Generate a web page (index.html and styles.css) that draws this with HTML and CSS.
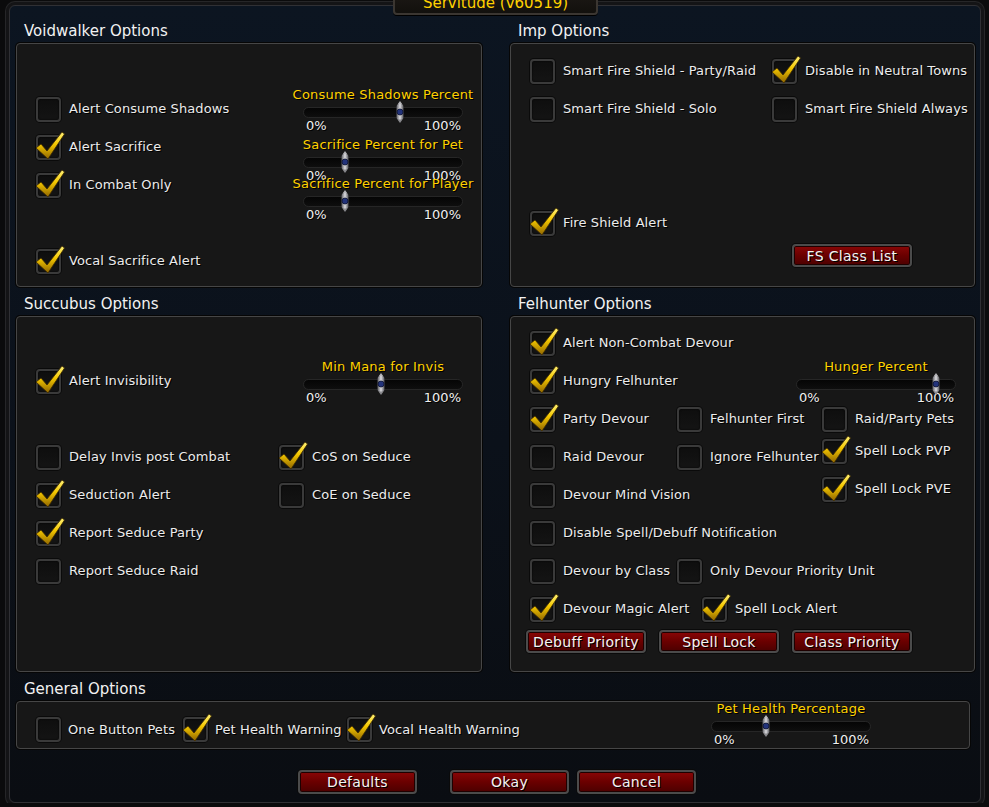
FILE: index.html
```html
<!DOCTYPE html>
<html lang="en">
<head>
    <meta charset="UTF-8">
    <meta name="viewport" content="width=device-width, initial-scale=1.0">
    <title>Servitude Options</title>
    <link rel="stylesheet" href="styles.css">
</head>
<body>

<svg class="defs" width="0" height="0" aria-hidden="true">
    <defs>
        <linearGradient id="gold" x1="0" y1="0" x2="0" y2="1">
            <stop offset="0" stop-color="#fff27a"/>
            <stop offset="0.45" stop-color="#f5c800"/>
            <stop offset="1" stop-color="#8f6500"/>
        </linearGradient>
        <linearGradient id="metal" x1="0" y1="0" x2="1" y2="0">
            <stop offset="0" stop-color="#5e5e63"/>
            <stop offset="0.5" stop-color="#dcdce0"/>
            <stop offset="1" stop-color="#55555a"/>
        </linearGradient>
        <symbol id="tick" viewBox="-2 -5 32 32">
            <path d="M0 13 L5 9 L11 16 L26 -3 L28.5 -1 L12 24 Z" fill="url(#gold)" stroke="#3d2b00" stroke-width="0.8" stroke-linejoin="round"/>
        </symbol>
        <symbol id="knob" viewBox="0 0 11 22">
            <path d="M5.5 0 L8 3.5 L3 3.5 Z" fill="#b8b8bc"/>
            <rect x="2" y="3" width="7" height="16" rx="3" fill="url(#metal)"/>
            <circle cx="5.5" cy="11" r="3" fill="#23337a" stroke="#0b1130" stroke-width="0.8"/>
            <path d="M3 18.5 L8 18.5 L5.5 22 Z" fill="#8a8a8e"/>
        </symbol>
    </defs>
</svg>

<div class="frame">
    <div class="title-tab">Servitude (v60519)</div>

    <div class="columns">
        <!-- Voidwalker -->
        <section class="group">
            <h2 class="group-title">Voidwalker Options</h2>
            <div class="panel panel-top grid-left">
                <div class="check r2 c1"><span class="box"></span>Alert Consume Shadows</div>
                <div class="check r3 c1 on"><span class="box"><svg><use href="#tick"/></svg></span>Alert Sacrifice</div>
                <div class="check r4 c1 on"><span class="box"><svg><use href="#tick"/></svg></span>In Combat Only</div>
                <div class="check r6 c1 on"><span class="box"><svg><use href="#tick"/></svg></span>Vocal Sacrifice Alert</div>

                <div class="slider r2 c3 s-first">
                    <div class="slider-label">Consume Shadows Percent</div>
                    <div class="track"><span class="thumb" style="left: 61%"><svg><use href="#knob"/></svg></span></div>
                    <div class="slider-range"><span>0%</span><span>100%</span></div>
                </div>
                <div class="slider r3 c3 s-second">
                    <div class="slider-label">Sacrifice Percent for Pet</div>
                    <div class="track"><span class="thumb" style="left: 26%"><svg><use href="#knob"/></svg></span></div>
                    <div class="slider-range"><span>0%</span><span>100%</span></div>
                </div>
                <div class="slider r4 c3 s-third">
                    <div class="slider-label">Sacrifice Percent for Player</div>
                    <div class="track"><span class="thumb" style="left: 26%"><svg><use href="#knob"/></svg></span></div>
                    <div class="slider-range"><span>0%</span><span>100%</span></div>
                </div>
            </div>
        </section>

        <!-- Imp -->
        <section class="group">
            <h2 class="group-title">Imp Options</h2>
            <div class="panel panel-top grid-imp">
                <div class="check r1 c1"><span class="box"></span>Smart Fire Shield - Party/Raid</div>
                <div class="check r1 c2 on"><span class="box"><svg><use href="#tick"/></svg></span>Disable in Neutral Towns</div>
                <div class="check r2 c1"><span class="box"></span>Smart Fire Shield - Solo</div>
                <div class="check r2 c2"><span class="box"></span>Smart Fire Shield Always</div>
                <div class="check r5 c1 on"><span class="box"><svg><use href="#tick"/></svg></span>Fire Shield Alert</div>
                <div class="btn-row r6 c2 fs-row">
                    <button class="btn">FS Class List</button>
                </div>
            </div>
        </section>

        <!-- Succubus -->
        <section class="group">
            <h2 class="group-title">Succubus Options</h2>
            <div class="panel panel-bottom grid-left">
                <div class="check r2 c1 on"><span class="box"><svg><use href="#tick"/></svg></span>Alert Invisibility</div>
                <div class="slider r2 c3 s-first">
                    <div class="slider-label">Min Mana for Invis</div>
                    <div class="track"><span class="thumb" style="left: 49%"><svg><use href="#knob"/></svg></span></div>
                    <div class="slider-range"><span>0%</span><span>100%</span></div>
                </div>
                <div class="check r4 c1"><span class="box"></span>Delay Invis post Combat</div>
                <div class="check r4 c2 on"><span class="box"><svg><use href="#tick"/></svg></span>CoS on Seduce</div>
                <div class="check r5 c1 on"><span class="box"><svg><use href="#tick"/></svg></span>Seduction Alert</div>
                <div class="check r5 c2"><span class="box"></span>CoE on Seduce</div>
                <div class="check r6 c1 on"><span class="box"><svg><use href="#tick"/></svg></span>Report Seduce Party</div>
                <div class="check r7 c1"><span class="box"></span>Report Seduce Raid</div>
            </div>
        </section>

        <!-- Felhunter -->
        <section class="group">
            <h2 class="group-title">Felhunter Options</h2>
            <div class="panel panel-bottom grid-fel">
                <div class="check r1 c1 on"><span class="box"><svg><use href="#tick"/></svg></span>Alert Non-Combat Devour</div>
                <div class="check r2 c1 on"><span class="box"><svg><use href="#tick"/></svg></span>Hungry Felhunter</div>
                <div class="slider r2 hunger s-first">
                    <div class="slider-label">Hunger Percent</div>
                    <div class="track"><span class="thumb" style="left: 88%"><svg><use href="#knob"/></svg></span></div>
                    <div class="slider-range"><span>0%</span><span>100%</span></div>
                </div>
                <div class="check r3 c1 on"><span class="box"><svg><use href="#tick"/></svg></span>Party Devour</div>
                <div class="check r3 c2"><span class="box"></span>Felhunter First</div>
                <div class="check r3 c4"><span class="box"></span>Raid/Party Pets</div>
                <div class="check r4 c1"><span class="box"></span>Raid Devour</div>
                <div class="check r4 c2"><span class="box"></span>Ignore Felhunter</div>
                <div class="check r4 c4 on lift"><span class="box"><svg><use href="#tick"/></svg></span>Spell Lock PVP</div>
                <div class="check r5 c1"><span class="box"></span>Devour Mind Vision</div>
                <div class="check r5 c4 on lift"><span class="box"><svg><use href="#tick"/></svg></span>Spell Lock PVE</div>
                <div class="check r6 c1"><span class="box"></span>Disable Spell/Debuff Notification</div>
                <div class="check r7 c1"><span class="box"></span>Devour by Class</div>
                <div class="check r7 c2"><span class="box"></span>Only Devour Priority Unit</div>
                <div class="check r8 c1 on"><span class="box"><svg><use href="#tick"/></svg></span>Devour Magic Alert</div>
                <div class="check r8 c2 on indent"><span class="box"><svg><use href="#tick"/></svg></span>Spell Lock Alert</div>
                <div class="btn-row r9 fel-buttons">
                    <button class="btn">Debuff Priority</button>
                    <button class="btn">Spell Lock</button>
                    <button class="btn">Class Priority</button>
                </div>
            </div>
        </section>
    </div>

    <!-- General -->
    <section class="group">
        <h2 class="group-title">General Options</h2>
        <div class="panel panel-general">
            <div class="general-checks">
                <div class="check g1"><span class="box"></span>One Button Pets</div>
                <div class="check on g2"><span class="box"><svg><use href="#tick"/></svg></span>Pet Health Warning</div>
                <div class="check on"><span class="box"><svg><use href="#tick"/></svg></span>Vocal Health Warning</div>
            </div>
            <div class="slider">
                <div class="slider-label">Pet Health Percentage</div>
                <div class="track"><span class="thumb" style="left: 34%"><svg><use href="#knob"/></svg></span></div>
                <div class="slider-range"><span>0%</span><span>100%</span></div>
            </div>
        </div>
    </section>

    <div class="footer">
        <button class="btn btn-big">Defaults</button>
        <button class="btn btn-big btn-okay">Okay</button>
        <button class="btn btn-big">Cancel</button>
    </div>
</div>

</body>
</html>
```

FILE: styles.css
```css
body {
    margin: 0;
    background-color: #0b0b0c;
    font-family: "DejaVu Sans", "Liberation Sans", sans-serif;
    font-size: 13px;
    color: #ececec;
    overflow: hidden;
}

.defs {
    position: absolute;
    width: 0;
    height: 0;
}

.frame {
    position: relative;
    box-sizing: border-box;
    width: 972px;
    height: 798px;
    margin: 5px 0 0 9px;
    padding: 8px 0 0 6px;
    border: 1px solid #303034;
    border-radius: 6px;
    background: linear-gradient(180deg, #0c1521 0%, #0b111a 55%, #0a0d12 100%);
    box-shadow: 0 0 0 3px #141416, 0 0 0 4px #262628;
}

.title-tab {
    position: absolute;
    top: -15px;
    left: 383px;
    box-sizing: border-box;
    width: 205px;
    height: 24px;
    border: 2px solid #3b3631;
    border-radius: 0 0 4px 4px;
    background: linear-gradient(180deg, #1c1915, #12100d);
    color: #ffd100;
    font-size: 15px;
    line-height: 21px;
    text-align: center;
    box-shadow: 0 1px 0 #000;
}

.columns {
    display: grid;
    grid-template-columns: 466px 465px;
    column-gap: 28px;
}

.group-title {
    display: flex;
    align-items: flex-end;
    box-sizing: border-box;
    height: 29px;
    margin: 0;
    padding: 0 0 3px 8px;
    font-size: 15px;
    font-weight: normal;
    line-height: 18px;
    color: #f2f2f2;
}

.panel {
    box-sizing: border-box;
    border: 1px solid #464646;
    border-radius: 4px;
    background-color: #171717;
    box-shadow: 0 0 0 1px #060606;
}

.panel-top {
    height: 244px;
    padding: 8px 0 0 19px;
}

.panel-bottom {
    height: 356px;
    padding: 7px 0 0 19px;
}

.grid-left,
.grid-imp,
.grid-fel {
    display: grid;
    grid-template-rows: repeat(9, 38px);
    align-content: start;
}

.grid-left {
    grid-template-columns: 243px 24px 160px;
}

.grid-imp {
    grid-template-columns: 242px 1fr;
}

.grid-fel {
    grid-template-columns: 147px 119px 26px 1fr;
}

.r1 { grid-row: 1; }
.r2 { grid-row: 2; }
.r3 { grid-row: 3; }
.r4 { grid-row: 4; }
.r5 { grid-row: 5; }
.r6 { grid-row: 6; }
.r7 { grid-row: 7; }
.r8 { grid-row: 8; }
.r9 { grid-row: 9; }

.c1 { grid-column: 1; }
.c2 { grid-column: 2; }
.c3 { grid-column: 3; }
.c4 { grid-column: 4; }

/* checkboxes */
.check {
    display: flex;
    align-items: center;
    gap: 8px;
    align-self: center;
    white-space: nowrap;
    line-height: 16px;
    letter-spacing: 0.1px;
    text-shadow: 1px 1px 0 #000;
}

.box {
    position: relative;
    flex: none;
    box-sizing: border-box;
    width: 25px;
    height: 25px;
    border: 2px solid #3a3a3a;
    border-radius: 4px;
    background: linear-gradient(180deg, #0e0e0e, #141414);
    box-shadow: inset 0 0 2px #000, 0 0 0 1px #0a0a0a;
}

.box svg {
    position: absolute;
    left: -4px;
    top: -7px;
    width: 32px;
    height: 32px;
    overflow: visible;
}

.lift {
    margin-bottom: 12px;
}

.indent {
    margin-left: 25px;
}

/* sliders */
.slider {
    display: flex;
    flex-direction: column;
    align-items: center;
    align-self: start;
    width: 160px;
}

.s-first { margin-top: -2px; }
.s-second { margin-top: 10px; }
.s-third { margin-top: 11px; }

.hunger {
    grid-column: 3 / span 2;
}

.slider-label {
    color: #ffd100;
    line-height: 14px;
    white-space: nowrap;
    letter-spacing: 0.2px;
    text-shadow: 1px 1px 0 #000;
}

.track {
    position: relative;
    box-sizing: border-box;
    width: 160px;
    height: 11px;
    margin-top: 5px;
    border: 1px solid #262626;
    border-radius: 6px;
    background: linear-gradient(180deg, #050505, #0e0e0e);
}

.thumb {
    position: absolute;
    top: -7px;
    width: 11px;
    height: 22px;
    transform: translateX(-50%);
}

.thumb svg {
    width: 11px;
    height: 22px;
}

.slider-range {
    display: flex;
    justify-content: space-between;
    box-sizing: border-box;
    width: 160px;
    margin-top: 1px;
    padding: 0 2px 0 3px;
    line-height: 14px;
    color: #f0f0f0;
    text-shadow: 1px 1px 0 #000;
}

/* buttons */
.btn-row {
    display: flex;
    gap: 13px;
    align-self: start;
    margin-top: 2px;
}

.fs-row {
    margin-left: 20px;
}

.fel-buttons {
    grid-column: 1 / -1;
    margin-left: -4px;
}

.btn {
    box-sizing: border-box;
    width: 120px;
    height: 23px;
    padding: 0;
    border: 2px solid #4b4b4b;
    border-radius: 4px;
    background: linear-gradient(180deg, #8a0606 0%, #6a0000 50%, #4c0000 100%);
    box-shadow: inset 0 0 0 1px #1e0000, 0 0 0 1px #0a0a0a;
    font-family: "DejaVu Sans", "Liberation Sans", sans-serif;
    font-size: 14px;
    letter-spacing: 0.3px;
    color: #f4f4f4;
    text-shadow: 1px 1px 0 #000;
}

/* general */
.panel-general {
    display: flex;
    align-items: flex-start;
    width: 954px;
    height: 48px;
    padding: 0 0 0 19px;
}

.general-checks {
    display: flex;
    width: 675px;
    margin-top: 15px;
}

.general-checks .check {
    gap: 7px;
}

.g1 { width: 147px; }
.g2 { width: 164px; }

.footer {
    display: flex;
    margin: 21px 0 0 282px;
}

.btn-big {
    width: 119px;
    height: 24px;
}

.btn-okay {
    margin: 0 8px 0 33px;
}
```
